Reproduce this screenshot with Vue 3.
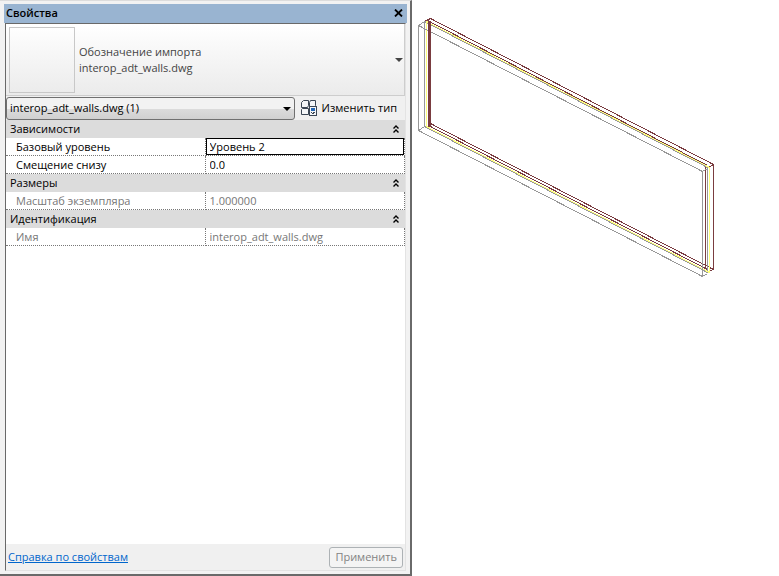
<script setup>
import { ref } from 'vue'

const selection = ref('interop_adt_walls.dwg (1)')

const groups = ref([
  {
    title: 'Зависимости',
    open: true,
    rows: [
      { id: 'level', label: 'Базовый уровень', value: 'Уровень 2', active: true },
      { id: 'offset', label: 'Смещение снизу', value: '0.0' }
    ]
  },
  {
    title: 'Размеры',
    open: true,
    rows: [
      { id: 'scale', label: 'Масштаб экземпляра', value: '1.000000', readonly: true }
    ]
  },
  {
    title: 'Идентификация',
    open: true,
    rows: [
      { id: 'name', label: 'Имя', value: 'interop_adt_walls.dwg', readonly: true }
    ]
  }
])

// wall edges in model view, back to front
const edges = [
  { color: 'maroon', d: 'M424 21 L430 18 L713 164 V269 L430 123' },
  { color: 'maroon', d: 'M427 20 L707 165 M428 125 L707 269 M705 166 V268' },
  { color: 'maroon', d: 'M713 164 L708 167 M713 269 L708 271' },
  { color: 'gray', d: 'M424 126 V21 L707 167 V272 L424 126' },
  { color: 'yellow', d: 'M426 126 V21 L709 167 V272 L426 126' },
  { color: 'gray', d: 'M418 25 L702 171 V276 L418 130 Z' },
  { color: 'gray', d: 'M418 25 L424 21 M418 130 L424 126 M702 171 L707 168 M702 276 L707 273' }
]
</script>

<template>
  <div class="workspace">
    <section class="palette">
      <header class="title-bar">
        <h1>Свойства</h1>
        <button class="close" type="button" aria-label="Закрыть">
          <svg width="9" height="8" viewBox="0 0 9 8">
            <path d="M1 0.5 L8 7.5 M8 0.5 L1 7.5" stroke="#000" stroke-width="1.8" />
          </svg>
        </button>
      </header>

      <div class="content">
        <button class="type-card" type="button">
          <span class="thumb"></span>
          <span class="type-name">Обозначение импорта<br />interop_adt_walls.dwg</span>
          <svg width="8" height="4" viewBox="0 0 8 4">
            <path d="M0 0 H8 L4 4 Z" fill="#444" />
          </svg>
        </button>

        <div class="selector">
          <div class="select-box">
            <select v-model="selection" aria-label="Выбранный элемент">
              <option>interop_adt_walls.dwg (1)</option>
            </select>
            <svg width="8" height="4" viewBox="0 0 8 4">
              <path d="M0 0 H8 L4 4 Z" fill="#000" />
            </svg>
          </div>
          <button class="edit-type" type="button">
            <svg width="17" height="16" viewBox="0 0 17 16" fill="none">
              <g fill="#f4f6f8" stroke="#3b4654">
                <path d="M0.5 2.5 L2.5 0.5 H7.5 V5.5 L6.5 7.5 H0.5 Z" />
                <path d="M8.5 2.5 L9.5 0.5 H14.5 V5.5 L13.5 6.5 H8.5 Z" />
                <path d="M0.5 9.5 L1.5 8.5 H7.5 V14.5 H0.5 Z" />
                <rect x="8.5" y="6.5" width="7" height="9" />
              </g>
              <rect x="10" y="8" width="4" height="3" fill="#2466b4" />
              <path d="M10 12.5 H11 M12 12.5 H14 M11 13.5 H13" stroke="#3b4654" />
            </svg>
            Изменить тип
          </button>
        </div>

        <div class="properties">
          <table>
            <tbody v-for="group in groups" :key="group.title">
              <tr class="group-row">
                <th colspan="2">
                  <button type="button" @click="group.open = !group.open">
                    {{ group.title }}
                    <svg :class="{ closed: !group.open }" width="6" height="8" viewBox="0 0 6 8">
                      <path d="M0.5 3.5 L3 1 L5.5 3.5 M0.5 7.5 L3 5 L5.5 7.5" fill="none" stroke="#000" stroke-width="1.4" />
                    </svg>
                  </button>
                </th>
              </tr>
              <template v-if="group.open">
                <tr v-for="row in group.rows" :key="row.id" :class="{ readonly: row.readonly }">
                  <td class="name">
                    <label :for="row.id">{{ row.label }}</label>
                  </td>
                  <td class="value">
                    <input
                      :id="row.id"
                      v-model="row.value"
                      :class="{ active: row.active }"
                      :readonly="row.readonly"
                      type="text"
                    />
                  </td>
                </tr>
              </template>
            </tbody>
          </table>
        </div>

        <footer class="actions">
          <a href="#help">Справка по свойствам</a>
          <button type="button" disabled>Применить</button>
        </footer>
      </div>
    </section>

    <main class="view">
      <svg viewBox="412 0 367 576" shape-rendering="crispEdges" role="img" aria-label="Стена">
        <g transform="translate(0.5 0.5)">
          <path v-for="edge in edges" :key="edge.d" :class="edge.color" :d="edge.d" />
          <path class="maroon thick" d="M429 21 V126" />
        </g>
      </svg>
    </main>
  </div>
</template>

<style>
body {
  margin: 0;
  background: #fff;
}
</style>

<style scoped>
.workspace {
  display: grid;
  grid-template-columns: 412fr 367fr;
  min-height: 100vh;
  font-family: "Open Sans", "Noto Sans", sans-serif;
  font-size: 11px;
  line-height: 16px;
  color: #000;
}

button,
input,
select {
  margin: 0;
  padding: 0;
  border: 0;
  background: none;
  font: inherit;
  color: inherit;
}

.palette {
  display: flex;
  flex-direction: column;
  box-sizing: border-box;
  min-width: 0;
  padding: 3px 3px 3px 4px;
  border-top: 1px solid #dcdcdc;
  border-right: 2px solid #6a6a6a;
  border-bottom: 2px solid #6a6a6a;
  background: #f2f2f2;
}

.title-bar {
  display: flex;
  align-items: center;
  justify-content: space-between;
  box-sizing: border-box;
  height: 19px;
  padding: 0 4px 2px 2px;
  background: #99b4d1;
}

h1 {
  margin: 0;
  font-size: 11px;
  font-weight: 600;
}

.close {
  display: flex;
}

.content {
  display: flex;
  flex: 1;
  flex-direction: column;
  margin: 0 1px;
  border: 1px solid #e3e3e3;
  border-top-color: #696969;
  border-left-color: #696969;
  background: #f0f0f0;
}

.type-card {
  display: flex;
  align-items: center;
  gap: 4px;
  height: 72px;
  padding: 0 1px 0 3px;
  border: solid #cdcdcd;
  border-width: 0 1px 1px 0;
  background: linear-gradient(#fff, #ebebeb);
  color: #444;
  text-align: left;
}

.thumb {
  box-sizing: border-box;
  width: 66px;
  height: 66px;
  border: 1px solid #c8c8c8;
}

.type-name {
  flex: 1;
}

.selector {
  display: flex;
  align-items: center;
  gap: 6px;
  height: 24px;
  padding-right: 8px;
}

.select-box {
  position: relative;
  flex: 1;
}

.select-box svg {
  position: absolute;
  top: 10px;
  right: 4px;
  pointer-events: none;
}

select {
  display: block;
  box-sizing: border-box;
  width: 100%;
  height: 23px;
  padding: 0 3px;
  border: 1px solid #707070;
  border-radius: 3px;
  background: linear-gradient(#f2f2f2 50%, #dcdcdc 50%, #d0d0d0);
  appearance: none;
}

.edit-type {
  display: flex;
  align-items: center;
  gap: 4px;
}

.properties {
  flex: 1;
  background: #fff;
}

table {
  width: 100%;
  border-collapse: separate;
  border-spacing: 0;
  table-layout: fixed;
}

th,
td {
  box-sizing: border-box;
  height: 18px;
  padding: 0;
}

th {
  background: #dcdcdc;
  font-weight: 400;
}

th button {
  display: flex;
  align-items: center;
  justify-content: space-between;
  width: 100%;
  padding: 0 6px 0 4px;
}

.closed {
  transform: rotate(180deg);
}

td {
  border-right: 1px dotted #777;
  border-bottom: 1px dotted #777;
}

.name {
  padding-left: 10px;
}

label {
  display: block;
}

input {
  display: block;
  box-sizing: border-box;
  width: 100%;
  height: 17px;
  padding: 0 4px;
  outline: none;
}

.active {
  padding: 0 3px;
  border: 1px solid #000;
}

.readonly {
  color: #777;
}

.actions {
  display: flex;
  align-items: center;
  justify-content: space-between;
  height: 26px;
  padding: 0 2px;
}

a {
  color: #0066cc;
}

.actions button {
  box-sizing: border-box;
  height: 21px;
  padding: 0 5px;
  border: 1px solid #adb2b5;
  border-radius: 3px;
  background: #f4f4f4;
  color: #838383;
}

.view svg {
  display: block;
  width: 100%;
}

.view path {
  fill: none;
}

.maroon {
  stroke: #7a3c40;
}

.yellow {
  stroke: #ffff7d;
}

.gray {
  stroke: #989898;
}

.thick {
  stroke-width: 3px;
}
</style>
